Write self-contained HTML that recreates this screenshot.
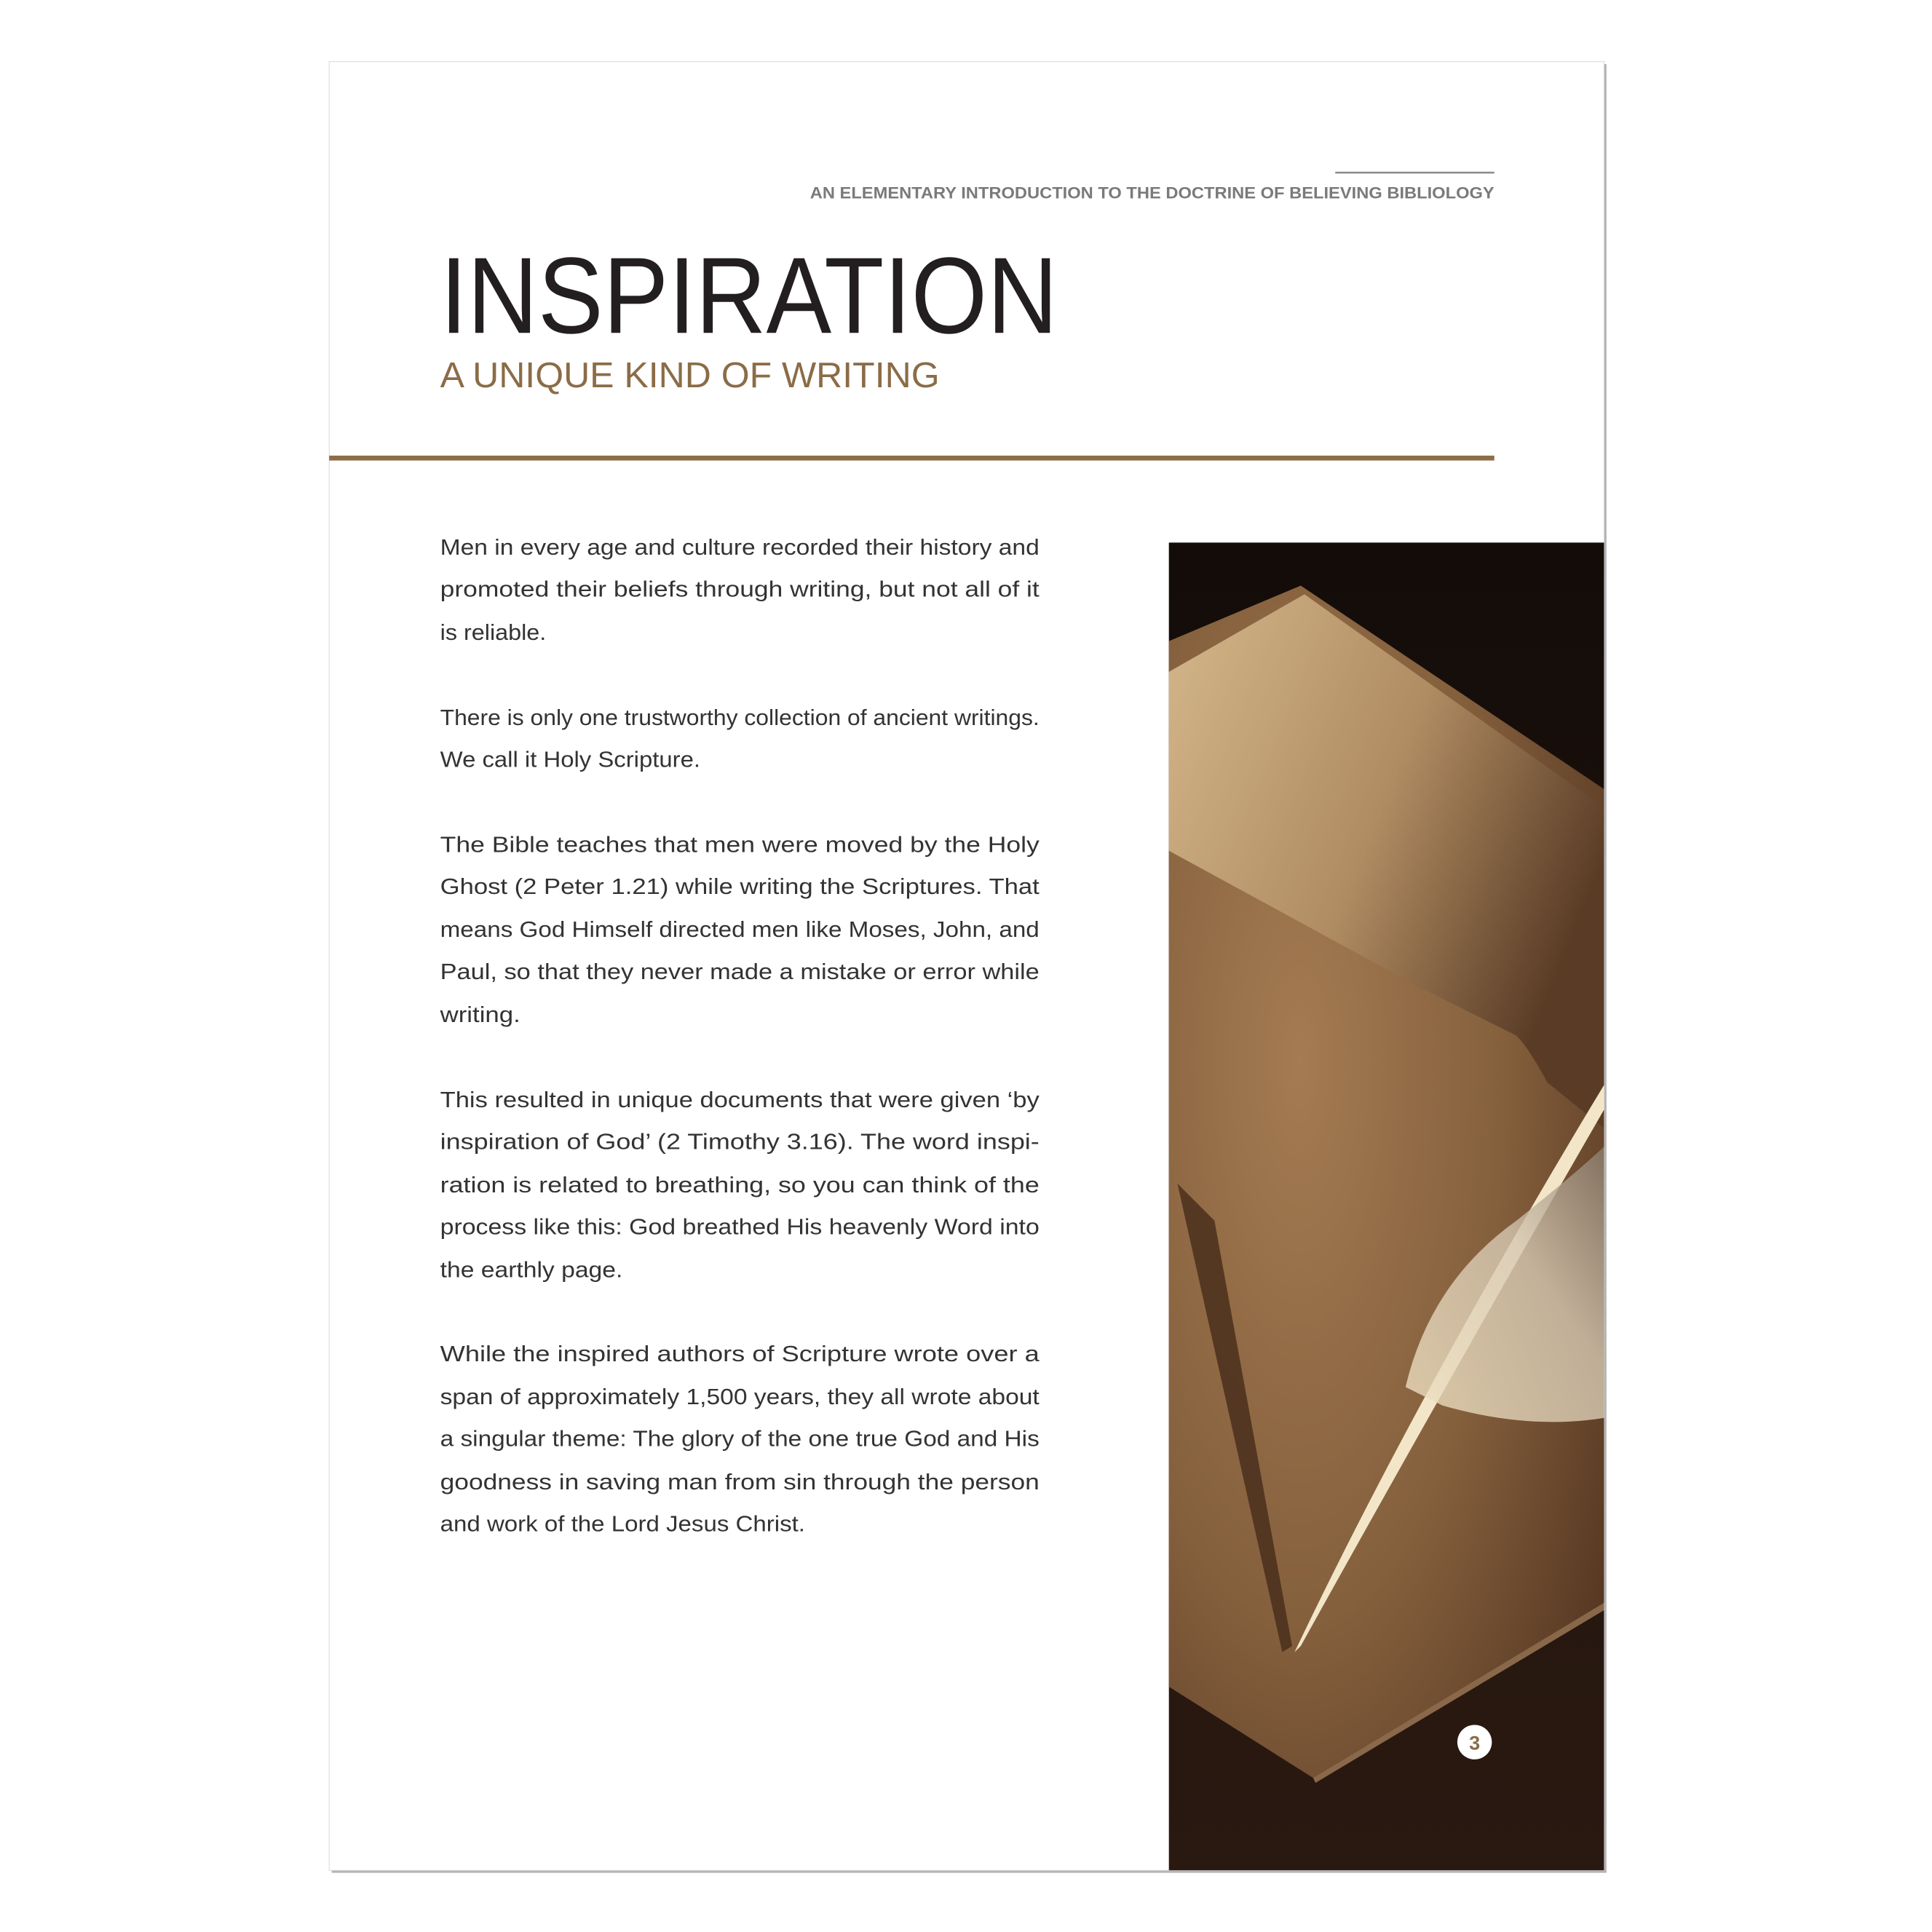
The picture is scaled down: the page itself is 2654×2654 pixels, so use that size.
<!DOCTYPE html>
<html><head><meta charset="utf-8"><style>
html,body{margin:0;padding:0;background:#fff;}
svg{display:block;}
</style></head><body>
<svg width="2654" height="2654" viewBox="0 0 1567 1567" xmlns="http://www.w3.org/2000/svg">
<defs>
<linearGradient id="bg" x1="0" y1="0" x2="0" y2="1">
<stop offset="0" stop-color="#130c09"/><stop offset="0.5" stop-color="#20140e"/><stop offset="1" stop-color="#2a1911"/>
</linearGradient>
<radialGradient id="sheet" cx="0.3" cy="0.4" r="0.85">
<stop offset="0" stop-color="#a47b52"/><stop offset="0.55" stop-color="#85603d"/><stop offset="1" stop-color="#553621"/>
</radialGradient>
<linearGradient id="roll" x1="0" y1="0" x2="1" y2="0.5">
<stop offset="0" stop-color="#d3b78a"/><stop offset="0.55" stop-color="#b08c62"/><stop offset="1" stop-color="#5a3c26"/>
</linearGradient>
<linearGradient id="feather" x1="0" y1="1" x2="1" y2="0">
<stop offset="0" stop-color="#efe0c0"/><stop offset="0.6" stop-color="#d6c8b2"/><stop offset="1" stop-color="#8a7d6d"/>
</linearGradient>
</defs>
<rect x="0" y="0" width="1567" height="1567" fill="#fff"/>
<rect x="269" y="52" width="1034" height="1467" fill="#b5b5b5"/>
<rect x="267" y="50" width="1034" height="1467" fill="#fff" stroke="#d8d8d8" stroke-width="0.6"/>

<line x1="1083" y1="140" x2="1212" y2="140" stroke="#8a8a8a" stroke-width="1.5"/>
<text x="1212" y="161" text-anchor="end" font-family="Liberation Sans, sans-serif" font-weight="bold" font-size="13" fill="#7a7a7a" textLength="555" lengthAdjust="spacingAndGlyphs">AN ELEMENTARY INTRODUCTION TO THE DOCTRINE OF BELIEVING BIBLIOLOGY</text>
<text x="357" y="270" font-family="Liberation Sans, sans-serif" font-size="88" fill="#231f20" textLength="501" lengthAdjust="spacingAndGlyphs">INSPIRATION</text>
<text x="357" y="314" font-family="Liberation Sans, sans-serif" font-size="29" fill="#8b6c47" textLength="405" lengthAdjust="spacingAndGlyphs">A UNIQUE KIND OF WRITING</text>
<line x1="267" y1="371.5" x2="1212" y2="371.5" stroke="#8b6d48" stroke-width="4"/>

<g font-family="Liberation Sans, sans-serif" font-size="18" fill="#333">
<text x="357" y="450" textLength="486" lengthAdjust="spacingAndGlyphs">Men in every age and culture recorded their history and</text>
<text x="357" y="484" textLength="486" lengthAdjust="spacingAndGlyphs">promoted their beliefs through writing, but not all of it</text>
<text x="357" y="519" textLength="86" lengthAdjust="spacingAndGlyphs">is reliable.</text>
<text x="357" y="588" textLength="486" lengthAdjust="spacingAndGlyphs">There is only one trustworthy collection of ancient writings.</text>
<text x="357" y="622" textLength="211" lengthAdjust="spacingAndGlyphs">We call it Holy Scripture.</text>
<text x="357" y="691" textLength="486" lengthAdjust="spacingAndGlyphs">The Bible teaches that men were moved by the Holy</text>
<text x="357" y="725" textLength="486" lengthAdjust="spacingAndGlyphs">Ghost (2 Peter 1.21) while writing the Scriptures. That</text>
<text x="357" y="760" textLength="486" lengthAdjust="spacingAndGlyphs">means God Himself directed men like Moses, John, and</text>
<text x="357" y="794" textLength="486" lengthAdjust="spacingAndGlyphs">Paul, so that they never made a mistake or error while</text>
<text x="357" y="829" textLength="65" lengthAdjust="spacingAndGlyphs">writing.</text>
<text x="357" y="898" textLength="486" lengthAdjust="spacingAndGlyphs">This resulted in unique documents that were given ‘by</text>
<text x="357" y="932" textLength="486" lengthAdjust="spacingAndGlyphs">inspiration of God’ (2 Timothy 3.16). The word inspi-</text>
<text x="357" y="967" textLength="486" lengthAdjust="spacingAndGlyphs">ration is related to breathing, so you can think of the</text>
<text x="357" y="1001" textLength="486" lengthAdjust="spacingAndGlyphs">process like this: God breathed His heavenly Word into</text>
<text x="357" y="1036" textLength="148" lengthAdjust="spacingAndGlyphs">the earthly page.</text>
<text x="357" y="1104" textLength="486" lengthAdjust="spacingAndGlyphs">While the inspired authors of Scripture wrote over a</text>
<text x="357" y="1139" textLength="486" lengthAdjust="spacingAndGlyphs">span of approximately 1,500 years, they all wrote about</text>
<text x="357" y="1173" textLength="486" lengthAdjust="spacingAndGlyphs">a singular theme: The glory of the one true God and His</text>
<text x="357" y="1208" textLength="486" lengthAdjust="spacingAndGlyphs">goodness in saving man from sin through the person</text>
<text x="357" y="1242" textLength="296" lengthAdjust="spacingAndGlyphs">and work of the Lord Jesus Christ.</text>
</g>

<svg x="948" y="440" width="353" height="1077" viewBox="948 440 353 1077">
<rect x="948" y="440" width="353" height="1077" fill="url(#bg)"/>
<polygon points="948,520 1055,475 1301,640 1301,1300 1065,1442 948,1368" fill="url(#sheet)"/>
<polygon points="955,960 985,990 1048,1335 1040,1340" fill="#4a2f1c" opacity="0.85"/>
<path d="M948,545 L1058,482 L1301,655 L1301,915 L1255,878 Q1240,850 1230,840 L1150,800 L948,690 Z" fill="url(#roll)"/>
<path d="M1050,1340 Q1150,1130 1301,880 L1301,900 Q1180,1110 1055,1335 Z" fill="#f3e6c8"/>
<path d="M1140,1125 Q1160,1040 1230,990 Q1280,950 1301,930 L1301,1150 Q1240,1160 1170,1140 Z" fill="url(#feather)" opacity="0.8"/>
<path d="M1065,1442 L1301,1300 L1301,1306 L1067,1446 Z" fill="#b48a62" opacity="0.7"/>
</svg>

<circle cx="1196" cy="1413" r="14" fill="#fff"/>
<text x="1196" y="1419" text-anchor="middle" font-family="Liberation Sans, sans-serif" font-weight="bold" font-size="16" fill="#8b6c47">3</text>
</svg>
</body></html>
